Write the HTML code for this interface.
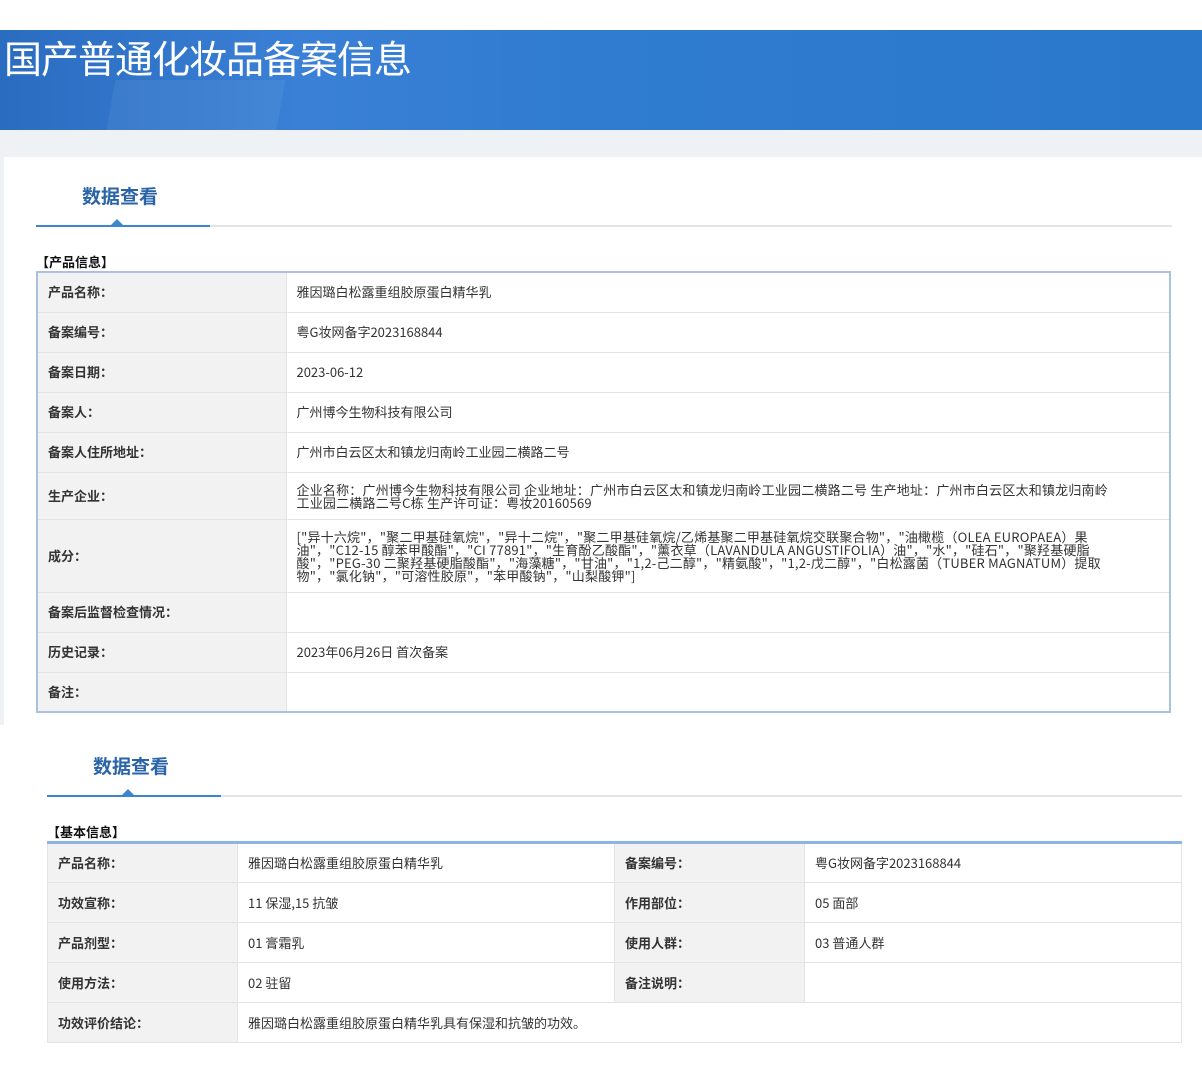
<!DOCTYPE html>
<html><head><meta charset="utf-8"><style>
*{margin:0;padding:0;box-sizing:border-box}
body{width:1202px;height:1080px;background:#fff;font-family:"Noto Sans CJK SC",sans-serif;color:#333;position:relative;overflow:hidden}
.banner{position:absolute;left:0;top:30px;width:1202px;height:100px;background:linear-gradient(90deg,#2a6cc0 0%,#3a80d6 25%,#2f7cd0 50%,#2a78cc 100%);overflow:hidden}
.banner .sh{position:absolute;left:110px;top:50px;width:170px;height:60px;background:rgba(255,255,255,0.06);transform:skewX(-10deg)}
.banner h1{position:absolute;left:4px;top:2px;font-size:38px;line-height:50px;font-weight:normal;color:#fff;letter-spacing:-1px}
.gray{position:absolute;left:0;top:130px;width:1202px;height:595px;background:#eef2f5}
.card{position:absolute;left:4px;top:157px;width:1198px;height:568px;background:#fff}
.tab{position:absolute;font-size:19px;line-height:26px;font-weight:bold;color:#2a64a8}
.line{position:absolute;height:2px;background:#e4e4e4}
.bl{position:absolute;height:2px;background:#3a87cf}
.tri{position:absolute;width:0;height:0;border-left:6px solid transparent;border-right:6px solid transparent;border-bottom:6px solid #3a87cf}
.sec{position:absolute;font-size:13px;line-height:18px;font-weight:bold;color:#111}
table{position:absolute;border-collapse:collapse;font-size:13px;font-family:"Noto Sans CJK SC",sans-serif}
td{border:1px solid #e3e3e3;padding:0 10px;vertical-align:middle;line-height:16px}
td.l{background:#f2f2f2;font-weight:bold;color:#333}
.t1{left:36px;top:271px;width:1135px;border:2px solid #a9c2de}
.t1 td.l{width:249px}
.t1 .s{line-height:13px;letter-spacing:0.2px;padding-right:55px}
.t2{left:47px;top:841px;width:1135px;border-top:3px solid #8fb3e3}
</style></head><body>
<div class="banner"><div class="sh"></div><h1>国产普通化妆品备案信息</h1></div>
<div class="gray"></div>
<div class="card"></div>
<div class="tab" style="left:82px;top:183px">数据查看</div>
<div class="line" style="left:210px;top:225px;width:962px"></div>
<div class="bl" style="left:36px;top:225px;width:174px"></div>
<div class="tri" style="left:111px;top:219px"></div>
<div class="sec" style="left:36px;top:253px">【产品信息】</div>
<table class="t1">
<tr style="height:40px"><td class="l">产品名称：</td><td>雅因璐白松露重组胶原蛋白精华乳</td></tr>
<tr style="height:40px"><td class="l">备案编号：</td><td>粤G妆网备字2023168844</td></tr>
<tr style="height:40px"><td class="l">备案日期：</td><td>2023-06-12</td></tr>
<tr style="height:40px"><td class="l">备案人：</td><td>广州博今生物科技有限公司</td></tr>
<tr style="height:40px"><td class="l">备案人住所地址：</td><td>广州市白云区太和镇龙归南岭工业园二横路二号</td></tr>
<tr style="height:47px"><td class="l">生产企业：</td><td class="s">企业名称：广州博今生物科技有限公司 企业地址：广州市白云区太和镇龙归南岭工业园二横路二号 生产地址：广州市白云区太和镇龙归南岭工业园二横路二号C栋 生产许可证：粤妆20160569</td></tr>
<tr style="height:73px"><td class="l">成分：</td><td class="s">["异十六烷"，"聚二甲基硅氧烷"，"异十二烷"，"聚二甲基硅氧烷/乙烯基聚二甲基硅氧烷交联聚合物"，"油橄榄（OLEA EUROPAEA）果油"，"C12-15 醇苯甲酸酯"，"CI 77891"，"生育酚乙酸酯"，"薰衣草（LAVANDULA ANGUSTIFOLIA）油"，"水"，"硅石"，"聚羟基硬脂酸"，"PEG-30 二聚羟基硬脂酸酯"，"海藻糖"，"甘油"，"1,2-己二醇"，"精氨酸"，"1,2-戊二醇"，"白松露菌（TUBER MAGNATUM）提取物"，"氯化钠"，"可溶性胶原"，"苯甲酸钠"，"山梨酸钾"]</td></tr>
<tr style="height:40px"><td class="l">备案后监督检查情况：</td><td></td></tr>
<tr style="height:40px"><td class="l">历史记录：</td><td>2023年06月26日 首次备案</td></tr>
<tr style="height:40px"><td class="l">备注：</td><td></td></tr>
</table>
<div class="tab" style="left:93px;top:753px">数据查看</div>
<div class="line" style="left:221px;top:795px;width:961px"></div>
<div class="bl" style="left:47px;top:795px;width:174px"></div>
<div class="tri" style="left:122px;top:789px"></div>
<div class="sec" style="left:47px;top:823px">【基本信息】</div>
<table class="t2">
<tr style="height:40px"><td class="l" style="width:190px">产品名称：</td><td style="width:377px">雅因璐白松露重组胶原蛋白精华乳</td><td class="l" style="width:190px">备案编号：</td><td>粤G妆网备字2023168844</td></tr>
<tr style="height:40px"><td class="l">功效宣称：</td><td>11 保湿,15 抗皱</td><td class="l">作用部位：</td><td>05 面部</td></tr>
<tr style="height:40px"><td class="l">产品剂型：</td><td>01 膏霜乳</td><td class="l">使用人群：</td><td>03 普通人群</td></tr>
<tr style="height:40px"><td class="l">使用方法：</td><td>02 驻留</td><td class="l">备注说明：</td><td></td></tr>
<tr style="height:40px"><td class="l">功效评价结论：</td><td colspan="3">雅因璐白松露重组胶原蛋白精华乳具有保湿和抗皱的功效。</td></tr>
</table>
</body></html>
